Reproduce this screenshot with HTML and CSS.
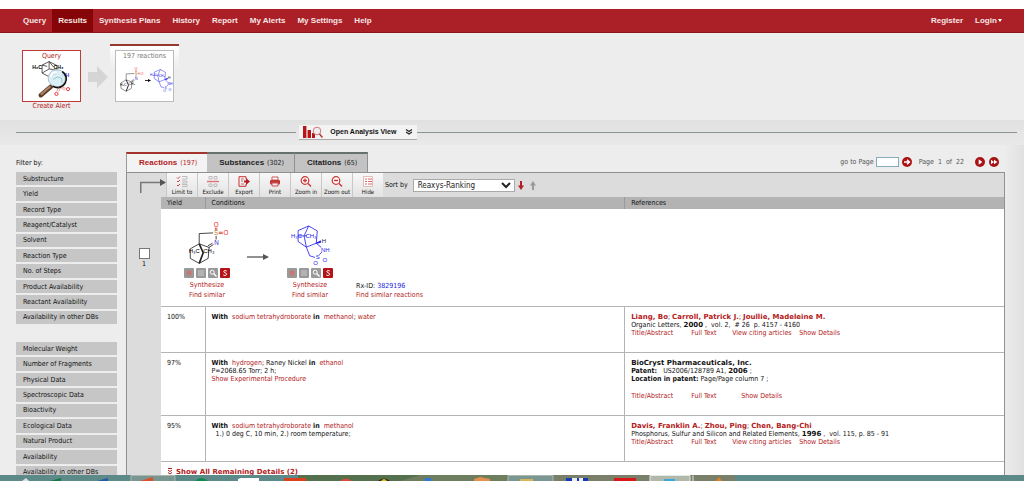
FILE: index.html
```html
<!DOCTYPE html>
<html lang="en">
<head>
<meta charset="utf-8">
<title>Reaction results</title>
<link rel="stylesheet" href="styles.css">
</head>
<body>
<svg class="defs" aria-hidden="true">
  <defs>
    <symbol id="mol-imine" viewBox="160 25 140 145">
      <g fill="none" stroke="#222" stroke-width="2.5">
        <path d="M247 64L205 66V97L178 112V141L205 156L232 141L235 108L205 97M256 73V84M248 99L234 108M245 95L231 103"/>
        <path d="M205 97L217 124L205 156" stroke-width="5"/>
        <path d="M254 48V56M258 48V56M264 62H276M264 66H276" stroke="#d33"/>
      </g>
      <g font-family="Liberation Sans, sans-serif" font-size="19" text-anchor="middle">
        <text x="256" y="46" fill="#e22">O</text><text x="286" y="71" fill="#e22">O</text>
        <text x="256" y="71" fill="#a88a20">S</text><text x="257" y="100" fill="#33c">N</text>
        <text x="190" y="126" font-size="18">H₃C</text><text x="234" y="124" font-size="18">CH₃</text>
      </g>
    </symbol>
    <symbol id="mol-sultam" viewBox="475 25 135 145">
      <g fill="none" stroke="#22e" stroke-width="2.5">
        <path d="M537 43L505 57V90L530 107L560 95L563 58L537 43L523 73L530 107L540 133L556 138M560 95L575 108M577 122L569 130M560 95L574 90M524 73H505M524 73H532"/>
        <path d="M560 95L573 88V93Z" fill="#22e"/>
      </g>
      <g font-family="Liberation Sans, sans-serif" font-size="18" text-anchor="middle" fill="#22e">
        <text x="500" y="78">H₃C</text><text x="544" y="80">CH₃</text>
        <text x="583" y="94" fill="#224">H</text><text x="587" y="121">NH</text>
        <text x="564" y="144">S</text><text x="558" y="161">O</text><text x="586" y="152">O</text>
      </g>
    </symbol>
    <symbol id="ic-alert" viewBox="0 0 10 10"><rect width="10" height="10" rx="1" fill="#999"/><path d="M5 2V6M5 7V8.4M3.5 3V7M6.5 3V7" stroke="#d66" stroke-width="1.1"/></symbol>
    <symbol id="ic-list" viewBox="0 0 10 10"><rect width="10" height="10" rx="1" fill="#999"/><path d="M2 3H8M2 5H8M2 7H8" stroke="#ccc"/></symbol>
    <symbol id="ic-find" viewBox="0 0 10 10"><rect width="10" height="10" rx="1" fill="#999"/><circle cx="4.2" cy="4.2" r="2" fill="none" stroke="#fff"/><path d="M5.6 5.6L8.5 8.5" stroke="#fff" stroke-width="1.4"/></symbol>
    <symbol id="ic-s" viewBox="0 0 10 10"><rect width="10" height="10" rx="1" fill="#b51318"/><path d="M6.7 3.1C6 2.3 3.8 2.3 3.8 3.6C3.8 5 6.6 4.6 6.6 6.2C6.6 7.7 4.2 7.8 3.3 6.9" fill="none" stroke="#fff"/></symbol>
  </defs>
</svg>

<nav class="nav">
  <a href="#">Query</a><a href="#" class="current">Results</a><a href="#">Synthesis Plans</a><a href="#">History</a><a href="#">Report</a><a href="#">My Alerts</a><a href="#">My Settings</a><a href="#">Help</a>
  <span class="account"><a href="#">Register</a><a href="#">Login <svg width="4" height="3" viewBox="0 0 4 3"><path d="M0 0H4L2 3Z" fill="#fff"/></svg></a></span>
</nav>

<header class="trail">
  <div class="query">
    <a href="#" class="thumb">
      <span>Query</span>
      <svg viewBox="80 60 150 125" aria-hidden="true">
        <g fill="none" stroke="#333" stroke-width="2.5"><path d="M146 65L124 76V101L146 112L170 101V77L146 65V88L124 101M146 88L170 92M124 76L140 80M146 65L160 82"/></g>
        <g font-family="Liberation Sans, sans-serif" font-size="16" font-weight="bold"><text x="93" y="88">H₃C</text><text x="160" y="88">CH₃</text><text x="186" y="112" fill="#44c">NH</text></g>
        <path d="M152 143L120 170" stroke="#5d3a26" stroke-width="14" stroke-linecap="round"/><path d="M150 142L120 168" stroke="#a98468" stroke-width="7"/>
        <circle cx="170" cy="117" r="27" fill="#d4edf3" fill-opacity=".85" stroke="#abc" stroke-width="3"/>
        <path d="M187 96A27 27 0 0 1 158 142" fill="none" stroke="#111" stroke-width="5"/>
        <path d="M150 113Q155 98 171 98" fill="none" stroke="#fff" stroke-width="6"/>
        <path d="M158 121L172 113L186 118V132" fill="none" stroke="#7ab" stroke-width="2"/>
        <path d="M175 146L170 158M181 148L176 159M186 143L198 149M184 148L196 154" stroke="#d66" stroke-width="2"/>
        <circle cx="169" cy="166" r="5" fill="none" stroke="#e33" stroke-width="3"/><circle cx="205" cy="151" r="5" fill="none" stroke="#e33" stroke-width="3"/>
      </svg>
    </a>
    <a href="#">Create Alert</a>
  </div>
  <svg class="step" viewBox="0 0 20 22" aria-hidden="true"><path d="M0 6H9V0L20 11L9 22V16H0Z" fill="#d5d5d5"/></svg>
  <div class="active-step">
    <a href="#" class="thumb">
      <span>197 reactions</span>
      <svg class="mini" viewBox="0 0 56 30" aria-hidden="true">
        <use href="#mol-imine" x="0" y="0" width="28" height="28"/>
        <path d="M28 14.5H32" stroke="#333"/><path d="M31 13L34 14.5L31 16Z"/>
        <use href="#mol-sultam" x="31" y="0" width="27" height="28"/>
      </svg>
    </a>
  </div>
</header>

<div class="analysis">
  <hr class="lead">
  <button type="button">
    <svg width="20" height="13" viewBox="0 0 20 13" aria-hidden="true"><path d="M0 0H3.4V12H0ZM4.6 4H8V12H4.6ZM9 7H12V12H9Z" fill="#b8151a"/><circle cx="14" cy="5" r="3.8" fill="#eee" stroke="#c77"/><path d="M16.5 8L19.5 11.5" stroke="#b33" stroke-width="1.5"/></svg>
    <span>Open Analysis View</span>
    <svg width="8" height="6" viewBox="0 0 8 6" aria-hidden="true"><path d="M1 .5L4 2.5L7 .5M1 3L4 5L7 3" fill="none" stroke="#222" stroke-width="1.1"/></svg>
  </button>
  <hr>
</div>

<main class="content">
  <aside class="filters">
    <h2>Filter by:</h2>
    <div class="group main-group">
      <button type="button">Substructure</button><button type="button">Yield</button><button type="button">Record Type</button><button type="button">Reagent/Catalyst</button><button type="button">Solvent</button><button type="button">Reaction Type</button><button type="button">No. of Steps</button><button type="button">Product Availability</button><button type="button">Reactant Availability</button><button type="button">Availability in other DBs</button>
    </div>
    <div class="group more-group">
      <button type="button">Molecular Weight</button><button type="button">Number of Fragments</button><button type="button">Physical Data</button><button type="button">Spectroscopic Data</button><button type="button">Bioactivity</button><button type="button">Ecological Data</button><button type="button">Natural Product</button><button type="button">Availability</button><button type="button">Availability in other DBs</button>
    </div>
  </aside>

  <section class="results">
    <div class="tabbar">
      <div class="tabs">
        <a href="#" class="tab selected"><b>Reactions</b> (197)</a><a href="#" class="tab"><b>Substances</b> (302)</a><a href="#" class="tab"><b>Citations</b> (65)</a>
      </div>
      <form class="pager">
        <label for="page">go to Page</label><input id="page" type="text">
        <button type="button" aria-label="Go"><svg viewBox="0 0 10 10"><circle cx="5" cy="5" r="5" fill="#a81414"/><path d="M2 5H7M5 2.7L7.5 5L5 7.3" fill="none" stroke="#fff" stroke-width="1.4"/></svg></button>
        <span class="count">Page &nbsp;1&nbsp; of &nbsp;22</span>
        <button type="button" aria-label="Next page"><svg viewBox="0 0 10 10"><circle cx="5" cy="5" r="5" fill="#a81414"/><path d="M3.7 2.3L7.3 5L3.7 7.7Z" fill="#fff"/></svg></button>
        <button type="button" aria-label="Last page" class="last"><svg viewBox="0 0 10 10"><circle cx="5" cy="5" r="5" fill="#a81414"/><path d="M2 2.7L5 5L2 7.3ZM5 2.7L8.4 5L5 7.3Z" fill="#fff"/></svg></button>
      </form>
    </div>

    <div class="panel">
      <div class="toolbar">
        <svg class="lead-arrow" viewBox="0 0 26 14" aria-hidden="true"><path d="M.75 14V3.5H21" fill="none" stroke="#777" stroke-width="1.5"/><path d="M20 0L26 3.5L20 7Z" fill="#555"/></svg>
        <div class="tools">
          <button type="button"><svg viewBox="0 0 12 11"><path d="M1 1.5L2 2.5L4 .5M1 5L2 6L4 4M1 9L2 10L4 8" fill="none" stroke="#c44"/><path d="M6 .5H11V3H6M6 5H11V7H6M6 8.500H11V10.500H6" fill="none" stroke="#bbb"/></svg>Limit to</button>
          <button type="button"><svg viewBox="0 0 12 11"><path d="M2 .5H5V3H2ZM7 .5H10V3H7ZM2 8H5V10.500H2ZM7 8H10V10.500H7Z" fill="none" stroke="#bbb"/><path d="M0 5.500H12" stroke="#d77" stroke-width="1.5"/></svg>Exclude</button>
          <button type="button"><svg viewBox="0 0 12 11"><path d="M8 3V.7H1V10.300H8V8" fill="none" stroke="#c33"/><path d="M3 3H6M3 5H5M3 8H6" stroke="#c66"/><path d="M6 4.500H8V2L12 5.500L8 9V6.500H6Z" fill="#b51d22"/></svg>Export</button>
          <button type="button"><svg viewBox="0 0 12 11"><path d="M3 1H9V4H3Z" fill="#fff" stroke="#c55"/><rect x="1" y="4" width="10" height="4.500" rx="1" fill="#c03a3a"/><path d="M3 7H9V10H3Z" fill="#eee" stroke="#c55"/></svg>Print</button>
          <button type="button"><svg viewBox="0 0 12 11"><circle cx="5" cy="4.500" r="3.800" fill="#fff" stroke="#c33" stroke-width="1.200"/><path d="M3 4.500H7M5 2.500V6.500M8 7.500L11 10.500" stroke="#c33" stroke-width="1.300"/></svg>Zoom in</button>
          <button type="button"><svg viewBox="0 0 12 11"><circle cx="5" cy="4.500" r="3.800" fill="#fff" stroke="#c33" stroke-width="1.200"/><path d="M3 4.500H7M8 7.500L11 10.500" stroke="#c33" stroke-width="1.300"/></svg>Zoom out</button>
          <button type="button"><svg viewBox="0 0 12 11"><path d="M1.500 .5H10.500V10.500H1.500Z" fill="#fff" stroke="#dbb"/><path d="M3 3H5M6 3H10M3 5.500H5M6 5.500H10M3 8H5M6 8H10" stroke="#d66" stroke-width="1.200"/></svg>Hide</button>
        </div>
        <label for="sort">Sort by</label>
        <select id="sort"><option>Reaxys-Ranking</option></select>
        <svg class="dir" viewBox="0 0 6 9"><path d="M2 0H4V4.500H6L3 9L0 4.500H2Z" fill="#b51d22"/></svg>
        <svg class="dir up" viewBox="0 0 6 9"><path d="M2 9H4V4.500H6L3 0L0 4.500H2Z" fill="#999"/></svg>
      </div>

      <div class="sheet">
        <div class="gutter"><input type="checkbox" id="rx1"><label for="rx1">1</label></div>
        <table>
          <thead><tr><th class="c-yield">Yield</th><th>Conditions</th><th class="c-refs">References</th></tr></thead>
          <tbody>
            <tr class="scheme-row"><td colspan="3">
              <div class="scheme">
                <div class="compound">
                  <svg class="mol" viewBox="0 0 47 48"><use href="#mol-imine" width="47" height="48"/></svg>
                  <span class="badges"><svg><use href="#ic-alert"/></svg><svg><use href="#ic-list"/></svg><svg><use href="#ic-find"/></svg><svg><use href="#ic-s"/></svg></span>
                  <a href="#">Synthesize</a><a href="#">Find similar</a>
                </div>
                <svg class="yields" viewBox="0 0 22 6" aria-hidden="true"><path d="M0 3H17" stroke="#555" stroke-width="1.300"/><path d="M16 0L22 3L16 6Z" fill="#555"/></svg>
                <div class="compound">
                  <svg class="mol" viewBox="0 0 47 48"><use href="#mol-sultam" width="47" height="48"/></svg>
                  <span class="badges"><svg><use href="#ic-alert"/></svg><svg><use href="#ic-list"/></svg><svg><use href="#ic-find"/></svg><svg><use href="#ic-s"/></svg></span>
                  <a href="#">Synthesize</a><a href="#">Find similar</a>
                </div>
                <div class="rxid"><span>Rx-ID: <a href="#" class="id">3829196</a></span><a href="#">Find similar reactions</a></div>
              </div>
            </td></tr>
            <tr class="short">
              <td>100%</td>
              <td><b>With</b>&nbsp; <a href="#">sodium tetrahydroborate</a> <b>in</b>&nbsp; <a href="#">methanol</a>; <a href="#">water</a></td>
              <td><a href="#" class="authors">Liang, Bo</a>; <a href="#" class="authors">Carroll, Patrick J.</a>; <a href="#" class="authors">Joullie, Madeleine M.</a><br>Organic Letters, <b class="wide">2000</b> ,&nbsp; vol. 2,&nbsp; # 26&nbsp; p. 4157 - 4160
                <div class="links"><a href="#">Title/Abstract</a><a href="#">Full Text</a><a href="#">View citing articles</a><a href="#">Show Details</a></div></td>
            </tr>
            <tr class="tall">
              <td>97%</td>
              <td><b>With</b>&nbsp; <a href="#">hydrogen</a>; Raney Nickel <b>in</b>&nbsp; <a href="#">ethanol</a><br>P=2068.65 Torr; 2 h;<br><a href="#">Show Experimental Procedure</a></td>
              <td><b class="wide">BioCryst Pharmaceuticals, Inc.</b><br><b>Patent:</b> &nbsp; US2006/128789 A1, <b class="wide">2006</b> ;<br><b>Location in patent:</b> Page/Page column 7 ;
                <div class="links spaced"><a href="#">Title/Abstract</a><a href="#">Full Text</a><a href="#">Show Details</a></div></td>
            </tr>
            <tr class="short">
              <td>95%</td>
              <td><b>With</b>&nbsp; <a href="#">sodium tetrahydroborate</a> <b>in</b>&nbsp; <a href="#">methanol</a><br>&nbsp; 1.) 0 deg C, 10 min, 2.) room temperature;</td>
              <td><a href="#" class="authors">Davis, Franklin A.</a>; <a href="#" class="authors">Zhou, Ping</a>; <a href="#" class="authors">Chen, Bang-Chi</a><br>Phosphorus, Sulfur and Silicon and Related Elements, <b class="wide">1996</b> ,&nbsp; vol. 115, p. 85 - 91
                <div class="links"><a href="#">Title/Abstract</a><a href="#">Full Text</a><a href="#">View citing articles</a><a href="#">Show Details</a></div></td>
            </tr>
            <tr class="more"><td colspan="3"><a href="#"><svg width="6" height="7" viewBox="0 0 6 7"><path d="M1 .5H5M1 2L3 3.500L5 2M1 4.500L3 6L5 4.500" fill="none" stroke="#a22"/></svg>Show All Remaining Details (2)</a></td></tr>
          </tbody>
        </table>
      </div>
    </div>
  </section>
</main>

<footer class="taskbar">
  <svg viewBox="0 0 1024 6" preserveAspectRatio="xMinYMin slice" aria-hidden="true">
    <rect x="298" width="437" height="6" fill="#6f7d5f"/><path d="M298 0H420L400 6H298Z" fill="#55704c"/>
    <path d="M508 0H735V6H508Z" fill="#7a7f69"/>
    <path d="M131 6V.5H175V6M508 6V.5H553V6" fill="#7a9690" stroke="#a8b8b0"/>
    <path d="M650 6V.5H690V6M693 6V.5" fill="#b0b8ac" stroke="#e8ece6"/>
    <path d="M22 6L26 3L29 6Z" fill="#dde"/><path d="M50 6L61 3V6Z" fill="#17774a"/><path d="M97 6L108 3V6Z" fill="#2459a8"/>
    <path d="M140 6L153 2V6Z" fill="#d9512c"/><path d="M195 6Q201 0 208 6Z" fill="#0f8a50"/><path d="M238 6V4L241 3H259V6Z" fill="#fff"/>
    <path d="M284 3H306V6H284Z" fill="#d9421c"/><path d="M340 6Q346 1 352 6Z" fill="#d94c3c"/><path d="M378 6Q384 1 390 6Z" fill="#222"/><path d="M381 6Q384 2 387 6Z" fill="#e8b820"/>
    <path d="M425 6V3H431V6Z" fill="#2878e0"/><path d="M474 6V4L480 2L490 4V6Z" fill="#e09050"/><path d="M520 6V4H533V6Z" fill="#d5b758"/>
    <path d="M566 6V3H588V6Z" fill="#1438b8"/><path d="M572 3H583V6H572Z" fill="#eee"/><path d="M577 3H579V6H577Z" fill="#1438b8"/>
    <path d="M614 3H636V6H614Z" fill="#d81818"/><path d="M664 6V4H675V6Z" fill="#38a8dc"/><path d="M716 6L719 2L722 6Z" fill="#e08020"/>
  </svg>
</footer>
</body>
</html>
```
FILE: styles.css
```css
* { box-sizing: border-box; }
html, body { height: 100%; }
body {
  margin: 0;
  padding-top: 9px;
  display: flex;
  flex-direction: column;
  overflow: hidden;
  background: #fff;
  color: #111;
  font: 7px/9px "DejaVu Sans Condensed", "DejaVu Sans", sans-serif;
}
a { color: #b3201a; text-decoration: none; }
button { font: inherit; color: inherit; border: 0; padding: 0; background: none; }
svg { display: block; }
.defs { position: absolute; width: 0; height: 0; }

.nav {
  flex: none;
  display: flex;
  height: 24px;
  padding-left: 17px;
  background: #ab2027;
  border-bottom: 1px solid #8c1419;
  font: bold 8px/23px "Liberation Sans", Arial, sans-serif;
}
.nav a { color: #f6e6e6; padding: 0 6px; }
.nav .current { background: #850508; }
.account { display: flex; margin-left: auto; padding-right: 16px; }
.account svg { display: inline-block; vertical-align: 1px; margin-left: -1px; }

.trail {
  flex: none;
  display: flex;
  align-items: flex-start;
  height: 87px;
  padding: 11px 22px 0;
  background: #ededed;
}
.query { padding-top: 6px; text-align: center; }
.query > a { display: block; }
.thumb {
  display: block;
  width: 59px;
  height: 52px;
  background: #fff;
  border: 1px solid #c03a3a;
  text-align: center;
}
.thumb span { display: block; padding-top: 1px; line-height: 8px; }
.thumb svg { width: 50px; height: 40px; margin: 0 auto; }
.step { width: 20px; height: 22px; margin: 22px 2px 0 7px; }
.active-step { padding: 4px 5px 0; border-top: 2px solid #97382f; background: linear-gradient(#fff, #ededed 22px); }
.active-step .thumb { border-color: #bbb; color: #777; }
.thumb .mini { width: 56px; height: 30px; margin-top: 6px; }

.analysis {
  flex: none;
  display: flex;
  align-items: center;
  height: 25px;
  padding: 0 7px 0 16px;
  background: linear-gradient(#e1e1e1, #e9e9e9);
}
.analysis hr { flex: 1; margin: 0; border: 0; border-top: 1px solid #8b9690; }
.analysis .lead { flex: 0 0 28%; margin-right: 3px; }
.analysis button {
  display: flex;
  align-items: center;
  height: 15px;
  width: 118px;
  padding: 0 4px;
  background: #f3f3f3;
  border-bottom: 1px solid #aaa;
  font: bold 7px/12px "Liberation Sans", Arial, sans-serif;
}
.analysis span { margin: 0 auto 0 7px; white-space: nowrap; }

.content {
  flex: 1;
  min-height: 0;
  display: flex;
  overflow: hidden;
  padding: 7px 19px 0 16px;
  background: linear-gradient(90deg, transparent 98%, #e0e0e0), #ededed;
}
.filters { flex: none; width: 101px; margin-right: 9px; }
.filters h2 { margin: 7px 0 4px; font: inherit; }
.group { display: flex; flex-direction: column; gap: 2px; }
.group button { flex: 1; padding: 1px 0 0 7px; background: #c6c6c7; text-align: left; }
.main-group { height: 152px; }
.more-group { height: 137px; margin-top: 18px; }

.results { flex: 1; min-width: 0; display: flex; flex-direction: column; }
.tabbar { display: flex; justify-content: space-between; height: 20px; }
.tabs { display: flex; }
.tab {
  padding: 0 10px 0 12px;
  background: #c3c3c3;
  border-top: 2px solid #66706c;
  border-right: 1px solid #909090;
  color: #222;
  line-height: 18px;
}
.tab b { font: bold 8px/18px "Liberation Sans", Arial, sans-serif; margin-right: 1px; }
.selected { background: #f3f3f3; border-color: #a5342c; border-left: 1px solid #999; border-right: 0; color: #b3201a; }
.pager { display: flex; align-items: center; padding-right: 6px; color: #555; }
.pager input { width: 23px; height: 10px; margin: 0 3px 0 2px; padding: 0; border: 1px solid #8ab; background: #fff; font: inherit; }
.pager svg { width: 10px; height: 10px; }
.count { margin: 0 11px 0 7px; white-space: nowrap; }
.last { margin-left: 4px; }

.panel { flex: 1; min-height: 0; display: flex; flex-direction: column; background: #dcdcdc; border: 1px solid #909090; border-bottom: 0; }
.toolbar { flex: none; display: flex; align-items: center; height: 24px; padding-left: 13px; }
.lead-arrow { width: 26px; height: 14px; margin-top: 2px; }
.tools { display: flex; height: 24px; margin-right: 2px; }
.tools button {
  width: 31px;
  display: flex;
  flex-direction: column;
  align-items: center;
  padding-top: 3px;
  border-left: 1px solid #c8c8c8;
  background: linear-gradient(#f8f8f8, #e2e2e2);
  font-size: 6px;
  line-height: 9px;
  white-space: nowrap;
}
.tools svg { width: 12px; height: 11px; }
.toolbar select {
  width: 102px;
  height: 13px;
  margin: 0 3px 0 5px;
  padding: 0;
  border: 1px solid #aaa;
  background: #fff;
  color: #222;
  font: 8px/11px "DejaVu Sans Condensed", "DejaVu Sans", sans-serif;
}
.dir { width: 6px; height: 9px; }
.up { margin-left: 6px; }

.sheet { flex: 1; min-height: 0; display: flex; }
.gutter { flex: none; width: 34px; padding-top: 51px; text-align: center; }
.gutter input { display: block; width: 11px; height: 11px; margin: 0 auto 1px; appearance: none; background: #fff; border: 1px solid #777; }
table { flex: 1; align-self: flex-start; border-collapse: collapse; table-layout: fixed; background: #fff; }
th { height: 12px; padding: 0 6px; background: #b3b3b4; border-left: 1px solid #999; font-weight: normal; text-align: left; }
.c-yield { width: 44px; }
.c-refs { width: 45%; }
td { padding: 6px 6px 0; border: 1px solid #b4b4b4; border-width: 1px 0 1px 1px; vertical-align: top; line-height: 8px; }
th:first-child, td:first-child { border-left: 0; }
.short { height: 46px; }
.tall { height: 63px; }
.scheme-row { height: 97px; }
.scheme-row td { padding: 11px 20px 0; border-top: 0; }
.scheme { display: flex; }
.compound { display: flex; flex-direction: column; align-items: center; width: 52px; line-height: 10px; }
.mol { width: 47px; height: 48px; }
.badges { display: flex; gap: 2px; margin-bottom: 2px; }
.badges svg { width: 10px; height: 10px; }
.yields { width: 22px; height: 6px; margin: 34px 15px 0 14px; }
.rxid { align-self: flex-end; display: flex; flex-direction: column; margin-left: 20px; line-height: 9px; }
.rxid .id { color: #22d; }
.wide, .authors { font-family: "DejaVu Sans", sans-serif; font-weight: bold; }
.links { display: flex; }
.links a:nth-child(1) { width: 60px; }
.links a:nth-child(2) { width: 41px; }
.links a:nth-child(3) { width: 67px; }
.spaced { margin-top: 9px; }
.spaced a:nth-child(2) { width: 50px; }
.more a { display: flex; gap: 3px; font: bold 7px/8px "DejaVu Sans", sans-serif; }

.taskbar { flex: none; height: 6px; background: #5b8a88; overflow: hidden; }
.taskbar svg { width: 100%; height: 6px; }
```
